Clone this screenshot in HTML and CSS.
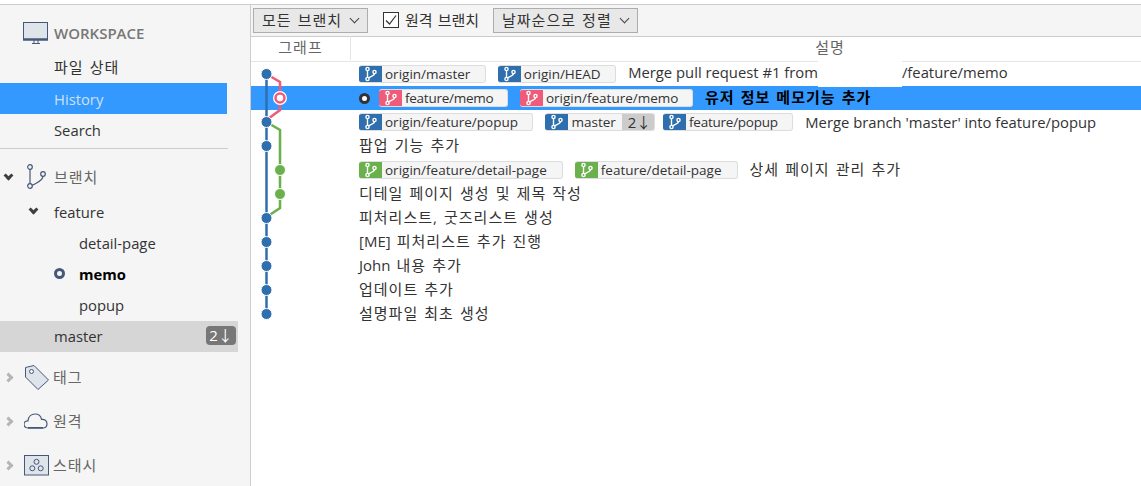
FILE: index.html
```html
<!DOCTYPE html>
<html lang="ko">
<head>
  <meta charset="UTF-8">
  <title>History</title>
  <link rel="stylesheet" href="styles.css">
</head>
<body>

  <!-- shared branch glyph for the ref pills -->
  <svg class="sprites" width="0" height="0">
    <symbol id="ref" viewBox="0 0 22 18">
      <g fill="none" stroke="#fff" stroke-width="1.4">
        <circle cx="8" cy="4" r="1.6"/>
        <circle cx="8" cy="14" r="1.6"/>
        <circle cx="15" cy="7" r="1.6"/>
        <path d="M8 5.6V12.4M15 8.6C15 11 11 11.5 9 13"/>
      </g>
    </symbol>
  </svg>

  <div class="app">
    <aside class="sidebar">
      <div class="workspace-head">
        <svg class="head-icon" width="26" height="22" viewBox="0 0 26 22">
          <rect x="0.5" y="0.5" width="24" height="17" fill="#dfe3ea" stroke="#46587a"/>
          <path d="M0 17.5H25" stroke="#46587a" stroke-width="2.5"/>
          <path d="M9 21.5H17M11 18V21M15 18V21" stroke="#46587a"/>
        </svg>
        <span>WORKSPACE</span>
      </div>
      <div class="nav-row ko">파일 상태</div>
      <div class="nav-row nav-selected">History</div>
      <div class="nav-row">Search</div>
      <div class="divider"></div>

      <div class="section section-branch">
        <span class="chevron chevron-open"></span>
        <svg class="head-icon" width="26" height="28" viewBox="0 0 26 28">
          <g fill="none" stroke="#46587a" stroke-width="1.2">
            <circle cx="4" cy="4" r="2.3"/>
            <circle cx="4" cy="23" r="2.3"/>
            <circle cx="17" cy="11" r="2.3"/>
            <path d="M4 6.3V20.7M17 13.3C17 18 10 20 6 22.5"/>
          </g>
        </svg>
        <span class="ko">브랜치</span>
      </div>
      <div class="tree-row tree-folder"><span class="chevron chevron-open chevron-small"></span>feature</div>
      <div class="tree-row tree-leaf">detail-page</div>
      <div class="tree-row tree-leaf tree-current"><span class="current-dot"></span>memo</div>
      <div class="tree-row tree-leaf">popup</div>
      <div class="tree-row tree-master">master<span class="badge">2↓</span></div>

      <div class="section section-first">
        <span class="chevron chevron-closed"></span>
        <svg class="head-icon" width="26" height="26" viewBox="0 0 26 26">
          <path d="M1.5 3.5L10 1.5L24.5 16L14 25.5L1.5 13Z" fill="#dfe3ea" stroke="#46587a" stroke-linejoin="round"/>
          <circle cx="7.5" cy="7.5" r="2" fill="#f5f5f5" stroke="#46587a"/>
        </svg>
        <span class="ko">태그</span>
      </div>
      <div class="section">
        <span class="chevron chevron-closed"></span>
        <svg class="head-icon" width="26" height="16" viewBox="0 0 26 16">
          <path d="M4 15C1.500 15 0 13.300 0 11.200C0 9 1.800 7.600 4 7.800C4.500 3.500 7.500 1 11 1C14.500 1 17 3.300 17.500 6.400C20.500 6 23 7.800 23 10.800C23 13.300 21.200 15 19 15Z" fill="#f5f5f5" stroke="#46587a" stroke-width="1.2"/>
          <path d="M4 14.800H19" stroke="#46587a" stroke-width="1.6"/>
        </svg>
        <span class="ko">원격</span>
      </div>
      <div class="section">
        <span class="chevron chevron-closed"></span>
        <svg class="head-icon" width="26" height="21" viewBox="0 0 26 21">
          <rect x="0.500" y="0.500" width="24" height="19.500" fill="#dfe3ea" stroke="#46587a"/>
          <g fill="none" stroke="#46587a">
            <circle cx="12.500" cy="6.800" r="2.500"/>
            <circle cx="8.300" cy="13.300" r="2.500"/>
            <circle cx="16.700" cy="13.300" r="2.500"/>
          </g>
        </svg>
        <span class="ko">스태시</span>
      </div>
    </aside>

    <main class="history">
      <div class="toolbar">
        <div class="select select-all"><span class="ko">모든 브랜치</span><span class="caret"></span></div>
        <label class="remote-check"><span class="checkbox"><svg width="14" height="14" viewBox="0 0 14 14"><path d="M2 7.500L5.500 11L12 2.500" fill="none" stroke="#333" stroke-width="1.200"/></svg></span><span class="ko ko-tight">원격 브랜치</span></label>
        <div class="select"><span class="ko">날짜순으로 정렬</span><span class="caret"></span></div>
      </div>

      <div class="columns">
        <div class="col-graph ko">그래프</div>
        <div class="col-desc ko">설명</div>
      </div>

      <div class="log">
        <svg class="graph" width="60" height="264" viewBox="0 0 60 264">
          <g fill="none" stroke-width="2.500">
            <path d="M15.500 12V252" stroke="#2f6fad"/>
            <path d="M15.500 12L29 20V48L15.500 58" stroke="#ef5b78"/>
            <path d="M15.500 60L29 68V146L15.500 155" stroke="#6ab04c"/>
          </g>
          <g fill="#2f6fad" stroke="#fff">
            <circle cx="15.500" cy="12" r="5.500"/>
            <circle cx="15.500" cy="60" r="5.500"/>
            <circle cx="15.500" cy="84" r="5.500"/>
            <circle cx="15.500" cy="156" r="5.500"/>
            <circle cx="15.500" cy="180" r="5.500"/>
            <circle cx="15.500" cy="204" r="5.500"/>
            <circle cx="15.500" cy="228" r="5.500"/>
            <circle cx="15.500" cy="252" r="5.500"/>
          </g>
          <g fill="#6ab04c" stroke="#fff">
            <circle cx="29" cy="108" r="5.500"/>
            <circle cx="29" cy="132" r="5.500"/>
          </g>
          <circle cx="29" cy="36" r="7" fill="#fff"/>
          <circle cx="29" cy="36" r="4.500" fill="#fff" stroke="#ef5b78" stroke-width="2.500"/>
        </svg>

        <div class="commit">
          <span class="ref ref-blue"><svg class="ref-icon"><use href="#ref"/></svg><span class="ref-name">origin/master</span></span>
          <span class="ref ref-blue"><svg class="ref-icon"><use href="#ref"/></svg><span class="ref-name">origin/HEAD</span></span>
          <span class="msg">Merge pull request #1 from<span class="redacted"></span>/feature/memo</span>
        </div>
        <div class="commit commit-selected">
          <span class="head-dot"></span>
          <span class="ref ref-pink ref-narrow"><svg class="ref-icon"><use href="#ref"/></svg><span class="ref-name">feature/memo</span></span>
          <span class="ref ref-pink"><svg class="ref-icon"><use href="#ref"/></svg><span class="ref-name">origin/feature/memo</span></span>
          <span class="msg ko">유저 정보 메모기능 추가</span>
        </div>
        <div class="commit">
          <span class="ref ref-blue"><svg class="ref-icon"><use href="#ref"/></svg><span class="ref-name">origin/feature/popup</span></span>
          <span class="ref ref-blue ref-tight"><svg class="ref-icon"><use href="#ref"/></svg><span class="ref-name">master</span><span class="ref-count">2↓</span></span>
          <span class="ref ref-blue ref-narrow"><svg class="ref-icon"><use href="#ref"/></svg><span class="ref-name">feature/popup</span></span>
          <span class="msg">Merge branch 'master' into feature/popup</span>
        </div>
        <div class="commit"><span class="msg ko">팝업 기능 추가</span></div>
        <div class="commit">
          <span class="ref ref-green"><svg class="ref-icon"><use href="#ref"/></svg><span class="ref-name">origin/feature/detail-page</span></span>
          <span class="ref ref-green"><svg class="ref-icon"><use href="#ref"/></svg><span class="ref-name">feature/detail-page</span></span>
          <span class="msg ko">상세 페이지 관리 추가</span>
        </div>
        <div class="commit"><span class="msg ko">디테일 페이지 생성 및 제목 작성</span></div>
        <div class="commit"><span class="msg ko">피처리스트, 굿즈리스트 생성</span></div>
        <div class="commit"><span class="msg ko"><span class="latin">[ME]</span> 피처리스트 추가 진행</span></div>
        <div class="commit"><span class="msg ko"><span class="latin">John</span> 내용 추가</span></div>
        <div class="commit"><span class="msg ko">업데이트 추가</span></div>
        <div class="commit"><span class="msg ko">설명파일 최초 생성</span></div>
      </div>
    </main>
  </div>

</body>
</html>
```

FILE: styles.css
```css
* {
  box-sizing: border-box;
}

html,
body {
  margin: 0;
  height: 486px;
  overflow: hidden;
}

body {
  background: #fff;
  color: #333;
  font-family: "Open Sans", "Noto Sans CJK KR", sans-serif;
  font-size: 14.800px;
  padding-top: 4px;
}

.sprites {
  display: block;
  position: absolute;
}

/* Korean text runs wider than the Latin next to it */
.ko {
  font-size: 15px;
  letter-spacing: 1px;
  word-spacing: 1.200px;
  position: relative;
  top: -1px;
}

.ko-tight {
  letter-spacing: 0;
}

.latin {
  letter-spacing: 0;
}

.app {
  display: flex;
  height: 482px;
  border-top: 1px solid #ccc;
}

/* Sidebar */
.sidebar {
  width: 250px;
  flex: none;
  background: #f5f5f5;
  white-space: nowrap;
}

.workspace-head {
  display: flex;
  align-items: center;
  height: 31px;
  margin: 12px 0 4px;
  padding-left: 23px;
  color: #777;
  font-size: 15px;
  font-weight: 600;
}

.head-icon {
  flex: none;
  margin-right: 5px;
}

.nav-row {
  display: flex;
  align-items: center;
  height: 31px;
  width: 227px;
  padding-left: 54px;
}

.nav-selected {
  background: #3399ff;
  color: #cfe0f2;
}

.divider {
  width: 228px;
  margin-top: 3px;
  border-top: 1px solid #ccc;
}

.section {
  display: flex;
  align-items: center;
  height: 44px;
  padding-left: 5px;
  color: #666;
}

.section .head-icon {
  margin-left: 11px;
  margin-right: 3px;
}

.section-branch {
  height: 40px;
  margin-top: 8px;
}

.section-first {
  margin-top: 3px;
}

.chevron {
  flex: none;
  width: 7px;
  height: 7px;
  border-style: solid;
  border-width: 0 3px 3px 0;
  transform: rotate(45deg);
}

.chevron-open {
  border-color: #3f3f3f;
  margin: -4px 0 0 0;
}

.section-branch .head-icon {
  margin-left: 14px;
  margin-right: 2px;
}

.chevron-closed {
  border-color: #b5b5b5;
  transform: rotate(-45deg);
  margin-right: 1px;
}

.chevron-small {
  position: absolute;
  left: 30px;
  top: 9px;
  margin: 0;
}

.tree-row {
  position: relative;
  display: flex;
  align-items: center;
  height: 31px;
  padding-bottom: 2px;
}

.tree-folder {
  padding-left: 54px;
}

.tree-leaf {
  padding-left: 79px;
}

.tree-current {
  color: #000;
  font-weight: 700;
}

.current-dot {
  position: absolute;
  left: 54px;
  top: 9px;
  width: 11px;
  height: 11px;
  border: 3px solid #46587a;
  border-radius: 50%;
}

.tree-master {
  justify-content: space-between;
  width: 238px;
  padding: 0 2px 2px 54px;
  background: #d6d6d6;
}

.badge {
  width: 30px;
  height: 19px;
  border-radius: 4px;
  background: #777;
  color: #fff;
  font-size: 15px;
  line-height: 19px;
  text-align: center;
}

/* History pane */
.history {
  flex: 1;
  min-width: 0;
  overflow: hidden;
  border-left: 1px solid #ccc;
}

.toolbar {
  display: flex;
  align-items: center;
  height: 32px;
  padding: 0 0 1px 2px;
  background: #f5f5f5;
  border-bottom: 1px solid #ccc;
  white-space: nowrap;
}

.select {
  display: flex;
  align-items: center;
  justify-content: space-between;
  width: 145px;
  height: 25px;
  padding: 0 8px;
  background: #e8e8e8;
  border: 1px solid #adadad;
}

.select-all {
  width: 115px;
}

.caret {
  width: 7px;
  height: 7px;
  margin: -3px 1px 0 0;
  border-style: solid;
  border-width: 0 1.5px 1.5px 0;
  border-color: #444;
  transform: rotate(45deg);
}

.remote-check {
  display: flex;
  align-items: center;
  width: 110px;
  margin-left: 15px;
}

.checkbox {
  display: flex;
  align-items: center;
  justify-content: center;
  width: 16px;
  height: 16px;
  margin-right: 6px;
  background: #fff;
  border: 1px solid #333;
}

.columns {
  display: flex;
  height: 25px;
  border-bottom: 1px solid #e5e5e5;
  color: #666;
  line-height: 23px;
  text-align: center;
}

.col-graph {
  width: 100px;
  flex: none;
  border-right: 1px solid #e5e5e5;
}

.col-desc {
  flex: 1;
  padding-left: 168px;
}

.log {
  position: relative;
}

.graph {
  position: absolute;
  left: 0;
  top: 0;
}

.commit {
  display: flex;
  align-items: center;
  height: 24px;
  padding-left: 108px;
  white-space: nowrap;
}

.commit-selected {
  background: #3399ff;
}

.commit-selected .msg {
  color: #000;
  font-weight: 700;
}

.msg.ko {
  top: -2px;
}

.head-dot {
  width: 11px;
  height: 11px;
  margin-right: 9px;
  background: #fff;
  border: 3px solid #333;
  border-radius: 50%;
}

.ref {
  display: flex;
  align-items: center;
  height: 18px;
  margin-right: 12px;
  background: #f5f5f5;
  border: 1px solid #ddd;
  border-left: 0;
  border-radius: 3px;
  overflow: hidden;
}

.ref-tight {
  margin-right: 8px;
}

.ref-icon {
  flex: none;
  width: 23px;
  height: 18px;
  margin: -1px 3px -1px 0;
}

.ref-blue .ref-icon {
  background: #2f6fad;
}

.ref-pink .ref-icon {
  background: #ef5b78;
}

.ref-green .ref-icon {
  background: #6ab04c;
}

.ref-name {
  padding-right: 14.500px;
  font-size: 13.500px;
}

.ref-pink .ref-name {
  padding-right: 13.500px;
}

.ref-green .ref-name {
  padding-right: 15px;
}

.ref-narrow .ref-name {
  letter-spacing: -0.250px;
}

.ref-tight .ref-name {
  padding-right: 6px;
}

.ref-count {
  align-self: stretch;
  padding: 0 3px 0 6px;
  background: #ccc;
  line-height: 16px;
}

.redacted {
  display: inline-block;
  width: 84px;
  height: 26px;
  background: #fff;
  vertical-align: middle;
}
```
